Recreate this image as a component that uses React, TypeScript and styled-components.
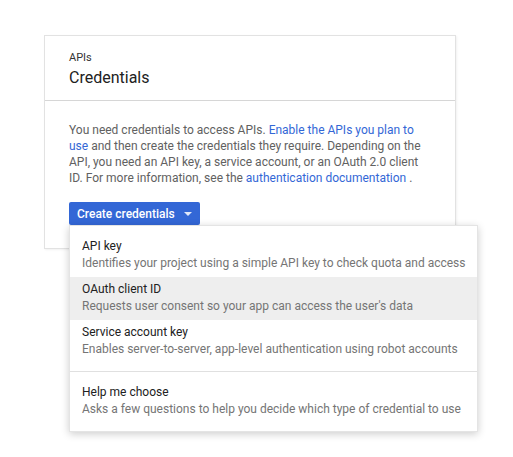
import styled, { createGlobalStyle } from 'styled-components';

const GlobalStyle = createGlobalStyle`
  html, body {
    margin: 0;
    padding: 0;
    background: #ffffff;
  }
  body {
    font-family: Roboto, "Liberation Sans", Arial, sans-serif;
    -webkit-font-smoothing: antialiased;
  }
`;

const menuItems = [
  { title: 'API key', desc: 'Identifies your project using a simple API key to check quota and access' },
  { title: 'OAuth client ID', desc: "Requests user consent so your app can access the user's data", active: true },
  { title: 'Service account key', desc: 'Enables server-to-server, app-level authentication using robot accounts' },
];

export default function App() {
  return (
    <>
      <GlobalStyle />
      <Page>
        <Card>
          <CardHeader>
            <Eyebrow>APIs</Eyebrow>
            <Title>Credentials</Title>
          </CardHeader>
          <CardBody>
            <Text>
              You need credentials to access APIs. <Link>Enable the APIs you plan to use</Link> and then create the
              credentials they require. Depending on the API, you need an API key, a service account, or an OAuth 2.0
              client ID. For more information, see the <Link>authentication documentation</Link> .
            </Text>
            <DropdownWrap>
              <Button>
                Create credentials
                <Caret />
              </Button>
              <Menu>
                {menuItems.map((item) => (
                  <MenuItem key={item.title} $active={item.active}>
                    <ItemTitle>{item.title}</ItemTitle>
                    <ItemDesc>{item.desc}</ItemDesc>
                  </MenuItem>
                ))}
                <Divider />
                <MenuItem>
                  <ItemTitle>Help me choose</ItemTitle>
                  <ItemDesc>Asks a few questions to help you decide which type of credential to use</ItemDesc>
                </MenuItem>
              </Menu>
            </DropdownWrap>
          </CardBody>
        </Card>
      </Page>
    </>
  );
}

const Page = styled.div`
  padding: 35px 0 0 44px;
  height: 457px;
  box-sizing: border-box;
`;

const Card = styled.div`
  width: 412px;
  height: 214px;
  box-sizing: border-box;
  border: 1px solid #e2e2e2;
  box-shadow: 1px 1px 2px rgba(0, 0, 0, 0.06);
  background: #fff;
`;

const CardHeader = styled.div`
  box-sizing: border-box;
  padding: 15px 24px 0;
  height: 65px;
  border-bottom: 1px solid #d6d6d6;
`;

const Eyebrow = styled.div`
  font-size: 11px;
  line-height: 14px;
  color: #333;
`;

const Title = styled.div`
  font-size: 16px;
  line-height: 22px;
  margin-top: 2px;
  color: #212121;
`;

const CardBody = styled.div`
  padding: 21px 24px 0;
`;

const Text = styled.p`
  margin: 0;
  font-size: 12px;
  line-height: 16px;
  color: #616161;
  width: 352px;
`;

const Link = styled.a`
  color: #3367d6;
  cursor: pointer;
`;

const DropdownWrap = styled.div`
  position: relative;
  margin-top: 16px;
`;

const Button = styled.button`
  display: flex;
  align-items: center;
  gap: 9px;
  height: 23px;
  padding: 0 8px 0 8px;
  border: none;
  border-radius: 2px;
  background: #3367d6;
  color: #fff;
  font-family: inherit;
  font-size: 12px;
  font-weight: 500;
  cursor: pointer;
`;

const Caret = styled.span`
  width: 0;
  height: 0;
  border-left: 4px solid transparent;
  border-right: 4px solid transparent;
  border-top: 4px solid rgba(255, 255, 255, 0.85);
`;

const Menu = styled.div`
  position: absolute;
  top: 23px;
  left: 0;
  width: 409px;
  box-sizing: border-box;
  padding: 8px 0;
  background: #fff;
  border: 1px solid #e4e4e4;
  box-shadow: 0 2px 8px rgba(0, 0, 0, 0.2);
`;

const MenuItem = styled.div<{ $active?: boolean }>`
  padding: 4px 12px 5px;
  background: ${(p) => (p.$active ? '#eeeeee' : 'transparent')};
  cursor: pointer;
`;

const ItemTitle = styled.div`
  font-size: 12px;
  line-height: 17px;
  color: #212121;
`;

const ItemDesc = styled.div`
  font-size: 12px;
  line-height: 17px;
  color: #757575;
  white-space: nowrap;
`;

const Divider = styled.div`
  height: 1px;
  background: #e0e0e0;
  margin: 8px 0;
`;
